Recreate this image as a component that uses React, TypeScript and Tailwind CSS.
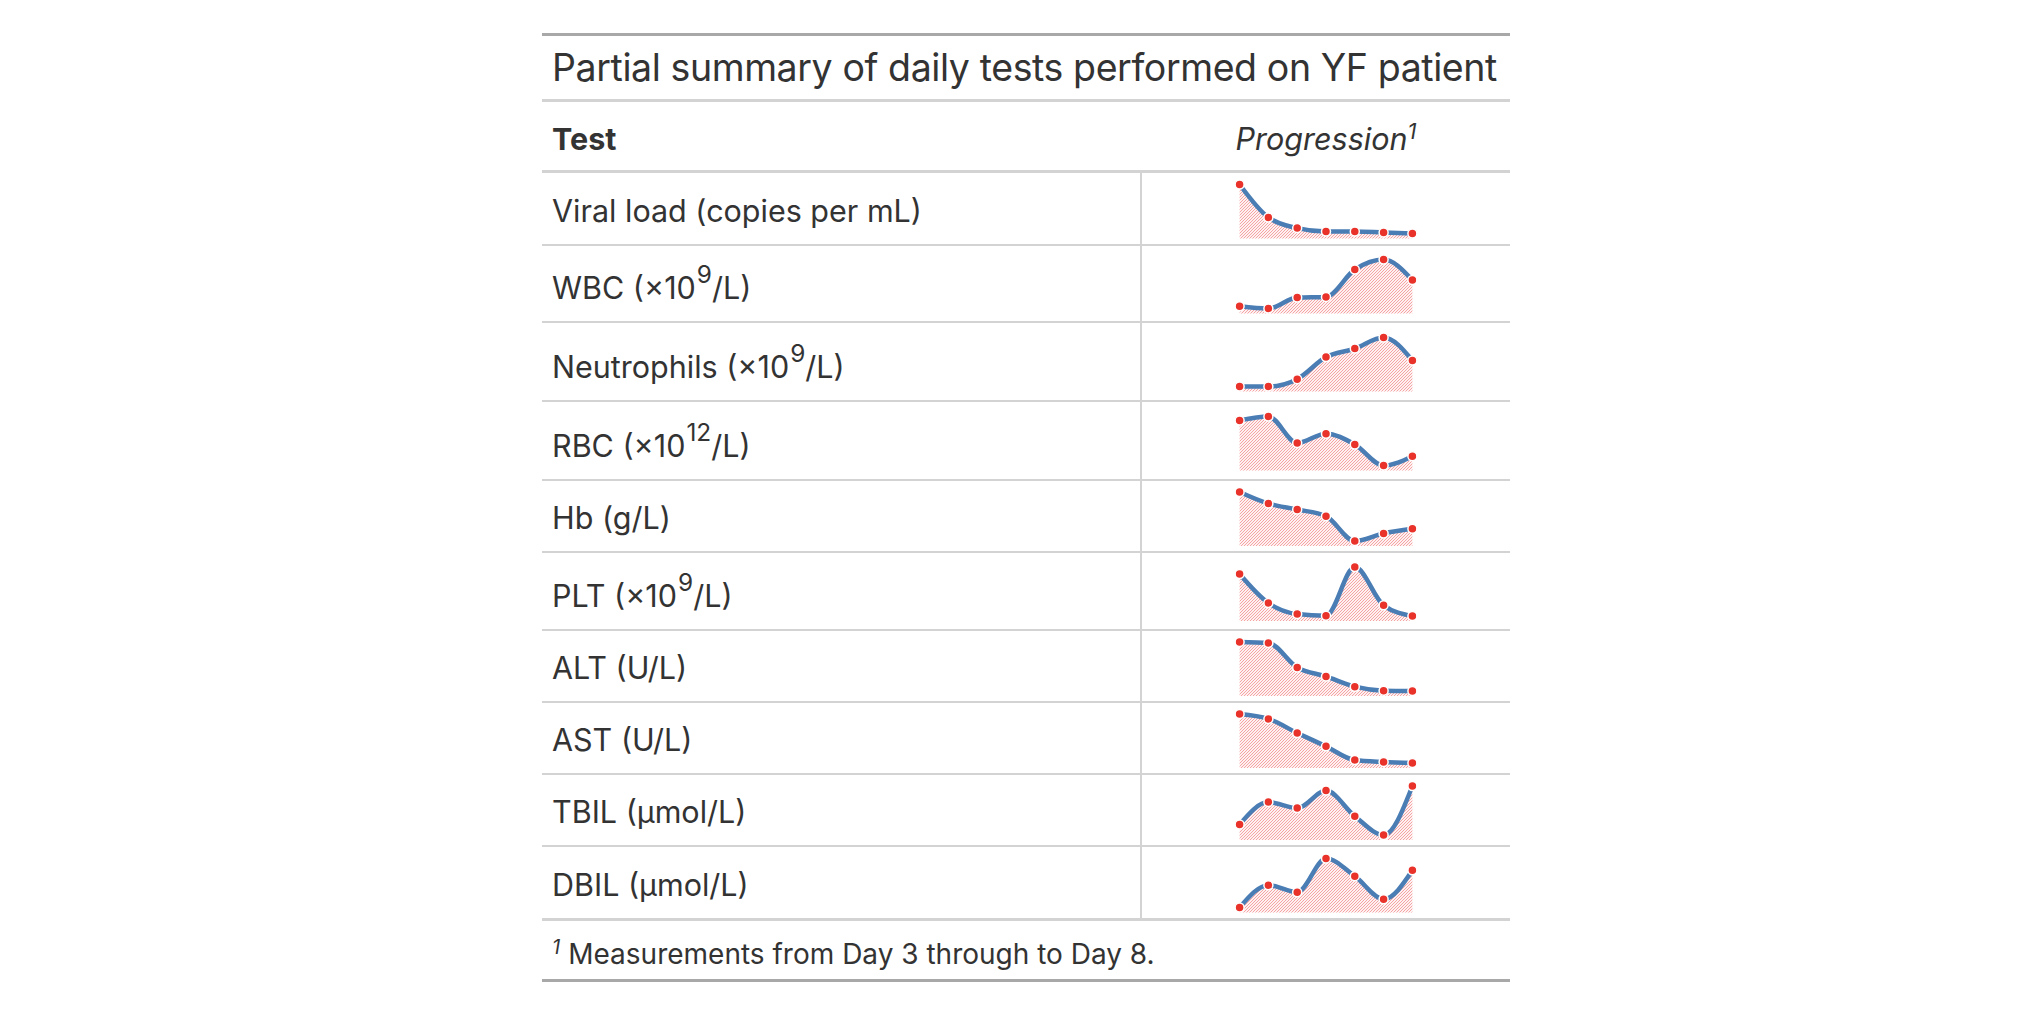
import React from 'react';

type Row = {
  key: string;
  label: React.ReactNode;
  h: string;
  px: number;
  // plotted levels, 1 = highest day, 0 = lowest day
  pts: number[];
};

const Sup = ({ children }: { children: React.ReactNode }) => <sup className="text-[0.72em]">{children}</sup>;
const Exp = ({ children }: { children: React.ReactNode }) => (
  <sup className="text-[0.8em] top-[-0.65em] ml-[1px]">{children}</sup>
);

const ROWS: Row[] = [
  { key: 'viral', label: <>Viral load (copies per mL)</>, h: 'h-[71px]', px: 71, pts: [1, 0.327, 0.11, 0.041, 0.041, 0.02, 0] },
  { key: 'wbc', label: <>WBC (×10<Exp>9</Exp>/L)</>, h: 'h-[75px]', px: 75, pts: [0.045, 0, 0.224, 0.237, 0.796, 1, 0.58] },
  { key: 'neut', label: <>Neutrophils (×10<Exp>9</Exp>/L)</>, h: 'h-[77px]', px: 77, pts: [0, 0, 0.15, 0.6, 0.774, 1, 0.53] },
  { key: 'rbc', label: <>RBC (×10<Exp>12</Exp>/L)</>, h: 'h-[77px]', px: 77, pts: [0.92, 1, 0.46, 0.65, 0.43, 0, 0.19] },
  { key: 'hb', label: <>Hb (g/L)</>, h: 'h-[70px]', px: 70, pts: [1, 0.764, 0.642, 0.507, 0, 0.155, 0.25] },
  { key: 'plt', label: <>PLT (×10<Exp>9</Exp>/L)</>, h: 'h-[76px]', px: 76, pts: [0.857, 0.265, 0.04, 0.007, 1, 0.218, 0] },
  { key: 'alt', label: <>ALT (U/L)</>, h: 'h-[70px]', px: 70, pts: [1, 0.98, 0.48, 0.297, 0.088, 0.007, 0] },
  { key: 'ast', label: <>AST (U/L)</>, h: 'h-[70px]', px: 70, pts: [1, 0.9, 0.614, 0.34, 0.06, 0.02, 0] },
  { key: 'tbil', label: <>TBIL (µmol/L)</>, h: 'h-[70px]', px: 70, pts: [0.215, 0.671, 0.55, 0.906, 0.383, 0, 1] },
  { key: 'dbil', label: <>DBIL (µmol/L)</>, h: 'h-[71px]', px: 71, pts: [0, 0.456, 0.313, 1, 0.64, 0.17, 0.76] },
];

const sign = (x: number) => (x < 0 ? -1 : 1);

// monotone cubic through evenly spaced points (same idea as d3 curveMonotoneX)
function curvePath(p: [number, number][]) {
  const n = p.length;
  const h = p[1][0] - p[0][0];
  const s = p.slice(0, -1).map((pt, i) => (p[i + 1][1] - pt[1]) / h);
  const t: number[] = new Array(n).fill(0);
  for (let i = 1; i < n - 1; i++) {
    const a = s[i - 1];
    const b = s[i];
    t[i] = (sign(a) + sign(b)) * Math.min(Math.abs(a), Math.abs(b), 0.5 * Math.abs((a + b) / 2)) || 0;
  }
  t[0] = (3 * s[0] - t[1]) / 2;
  t[n - 1] = (3 * s[n - 2] - t[n - 2]) / 2;

  const dx = h / 3;
  let d = `M${p[0][0]},${p[0][1]}`;
  for (let i = 0; i < n - 1; i++) {
    const [x0, y0] = p[i];
    const [x1, y1] = p[i + 1];
    d += ` C${x0 + dx},${y0 + dx * t[i]} ${x1 - dx},${y1 - dx * t[i + 1]} ${x1},${y1}`;
  }
  return d;
}

function Sparkline({ id, pts, height }: { id: string; pts: number[]; height: number }) {
  const width = 184;
  const top = height / 2 + 3 - 27;
  const base = top + 54;
  const points = pts.map((v, i) => [5.6 + i * 28.8, top + (1 - v) * 49] as [number, number]);
  const line = curvePath(points);
  const last = points[points.length - 1];
  const area = `${line} L${last[0]},${base} L${points[0][0]},${base} Z`;

  return (
    <svg width={width} height={height} viewBox={`0 0 ${width} ${height}`} className="block">
      <defs>
        <pattern id={`hatch-${id}`} width="3" height="3" patternUnits="userSpaceOnUse">
          <rect width="3" height="3" fill="#fff1f1" />
          <path d="M0,3 l3,-3 M-1,1 l2,-2 M2,4 l2,-2" stroke="#f5a4a4" strokeWidth="1" />
        </pattern>
      </defs>
      <path d={area} fill={`url(#hatch-${id})`} />
      <path d={line} fill="none" stroke="#4a7db4" strokeWidth="4.5" />
      {points.map(([x, y], i) => (
        <circle key={i} cx={x} cy={y} r="4.5" fill="#e8322a" stroke="#ffffff" strokeWidth="1.5" />
      ))}
    </svg>
  );
}

export default function App() {
  return (
    <div
      className="min-h-screen bg-white flex justify-center pl-[8px] pt-[33px] text-[#333333]"
      style={{ fontFamily: 'Inter, "Liberation Sans", sans-serif' }}
    >
      <div className="w-[968px] flex flex-col self-start border-t-[3px] border-[#a8a8a8]">
        {/* Title */}
        <div className="h-[66px] flex items-end pl-[10px] pb-[3px] border-b-[3px] border-[#d3d3d3] text-[37.5px] tracking-[-0.4px] whitespace-nowrap">
          <span>Partial summary of daily tests performed on YF patient</span>
        </div>

        {/* Column labels */}
        <div className="h-[71px] flex border-b-[3px] border-[#d3d3d3] text-[30.5px]">
          <div className="w-[600px] flex items-end pl-[10px] pb-[8px] font-bold">
            <span>Test</span>
          </div>
          <div className="flex-1 flex items-end justify-center pb-[8px] italic">
            <span>
              Progression<Sup>1</Sup>
            </span>
          </div>
        </div>

        {/* Body */}
        {ROWS.map((row, i) => (
          <div
            key={row.key}
            className={`flex text-[30.5px] ${row.h} ${
              i === ROWS.length - 1 ? 'border-b-[3px]' : 'border-b-2'
            } border-[#d3d3d3] box-content`}
          >
            <div className="w-[598px] flex items-end pl-[10px] pb-[10px] whitespace-nowrap">
              <span>{row.label}</span>
            </div>
            <div className="flex-1 flex justify-center border-l-2 border-[#d3d3d3]">
              <Sparkline id={row.key} pts={row.pts} height={row.px} />
            </div>
          </div>
        ))}

        {/* Footnote */}
        <div className="h-[61px] flex items-end pl-[10px] pb-[4px] border-b-[3px] border-[#a8a8a8] text-[28px]">
          <span>
            <sup className="italic text-[0.72em] mr-[8px]">1</sup>
            Measurements from Day 3 through to Day 8.
          </span>
        </div>
      </div>
    </div>
  );
}
